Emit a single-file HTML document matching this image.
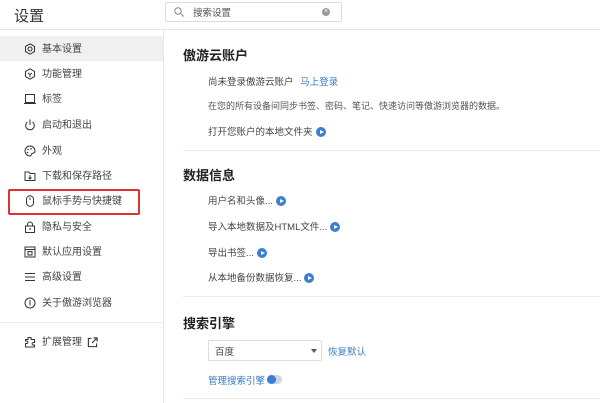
<!DOCTYPE html>
<html><head><meta charset="utf-8"><style>
*{margin:0;padding:0;box-sizing:border-box}
body{width:600px;height:403px;overflow:hidden;background:#fff;font-family:"Liberation Sans","Noto Sans CJK SC",sans-serif;color:#333;position:relative;font-size:10px}
.a{position:absolute;white-space:nowrap}
.hdr{left:0;top:0;width:600px;height:30px;border-bottom:1px solid #e6e6e6}
.side{left:0;top:30px;width:164px;height:373px;border-right:1px solid #e8e8e8}
.it{position:absolute;left:0;width:163px;height:25px;line-height:25px;padding-left:42px;font-size:10px;color:#444;margin-top:1px}
.ic{position:absolute;left:24px;top:6px;width:12px;height:12px}
.h{font-size:13px;font-weight:bold;color:#222}
.t{font-size:9.5px;color:#444}
.sep{height:1px;background:#ececec}
.play{display:inline-block;width:10px;height:10px;border-radius:50%;background:#3b7fd4;vertical-align:middle;margin-left:3px;position:relative}
.play:after{content:"";position:absolute;left:4px;top:2.5px;border-left:4px solid #fff;border-top:2.5px solid transparent;border-bottom:2.5px solid transparent}
</style></head><body>
<div class="a hdr"></div>
<div class="a" style="left:14px;top:5px;font-size:15px;color:#333">设置</div>
<div class="a" style="left:165px;top:2px;width:177px;height:20px;border:1px solid #ddd;border-radius:2px"></div>
<svg class="a" style="left:174px;top:7px" width="10" height="10"><circle cx="4" cy="4" r="3.2" fill="none" stroke="#888" stroke-width="1"/><line x1="6.5" y1="6.5" x2="9.5" y2="9.5" stroke="#888"/></svg>
<div class="a" style="left:193px;top:5px;font-size:9.5px;color:#555">搜索设置</div>
<div class="a" style="left:322px;top:8px;width:8px;height:8px;border-radius:50%;background:#999;color:#fff;font-size:7px;line-height:8px;text-align:center">×</div>
<div class="a side"></div>
<div class="a" style="left:0;top:36px;width:163px;height:25px;background:#f0f0f0"></div>
<div class="it" style="top:36px"><svg class="ic" viewBox="0 0 12 12"><circle cx="6" cy="6" r="2" fill="none" stroke="#333"/><path d="M6 .8L10.5 3.4V8.6L6 11.2 1.5 8.6V3.4Z" fill="none" stroke="#333"/></svg>基本设置</div>
<div class="it" style="top:61px"><svg class="ic" viewBox="0 0 12 12"><path d="M6 .8L10.5 3.4V8.6L6 11.2 1.5 8.6V3.4Z" fill="none" stroke="#333"/><path d="M4 5l2 1.5L8 5M6 6.5V9" fill="none" stroke="#333"/></svg>功能管理</div>
<div class="it" style="top:86px"><svg class="ic" viewBox="0 0 12 12"><rect x="1.5" y="1.5" width="9" height="8" fill="none" stroke="#333"/><line x1="0" y1="10.5" x2="12" y2="10.5" stroke="#333"/></svg>标签</div>
<div class="it" style="top:112px"><svg class="ic" viewBox="0 0 12 12"><path d="M3.5 3A4.3 4.3 0 1 0 8.5 3" fill="none" stroke="#333"/><line x1="6" y1="0.5" x2="6" y2="6" stroke="#333"/></svg>启动和退出</div>
<div class="it" style="top:138px"><svg class="ic" viewBox="0 0 12 12"><path d="M6 1A5 5 0 1 0 6 11C7.5 11 7 9 8 8.5S11 8.5 11 6A5 5 0 0 0 6 1Z" fill="none" stroke="#333"/><circle cx="4" cy="4.5" r=".8" fill="#333"/><circle cx="7" cy="3.8" r=".8" fill="#333"/><circle cx="3.5" cy="7.5" r=".8" fill="#333"/></svg>外观</div>
<div class="it" style="top:163px"><svg class="ic" viewBox="0 0 12 12"><path d="M1 2H5L6 3.5H11V10.5H1Z" fill="none" stroke="#333"/><path d="M6 5V9M4.5 7.5L6 9 7.5 7.5" fill="none" stroke="#333"/></svg>下载和保存路径</div>
<div class="it" style="top:188px"><svg class="ic" viewBox="0 0 12 12"><rect x="2.5" y="0.8" width="7" height="10.4" rx="3.5" fill="none" stroke="#333"/><line x1="6" y1="2.5" x2="6" y2="5" stroke="#333"/></svg>鼠标手势与快捷键</div>
<div class="a" style="left:8px;top:189px;width:132px;height:26px;border:2px solid #d33;border-radius:2px"></div>
<div class="it" style="top:214px"><svg class="ic" viewBox="0 0 12 12"><rect x="1.5" y="5" width="9" height="6.5" fill="none" stroke="#333"/><path d="M3.5 5V3.5A2.5 2.5 0 0 1 8.5 3.5V5" fill="none" stroke="#333"/><circle cx="6" cy="8" r=".9" fill="#333"/></svg>隐私与安全</div>
<div class="it" style="top:239px"><svg class="ic" viewBox="0 0 12 12"><rect x="1" y="1" width="10" height="10" fill="none" stroke="#333"/><line x1="1" y1="3.5" x2="11" y2="3.5" stroke="#333"/><rect x="4" y="5.5" width="4" height="3.5" fill="none" stroke="#333"/></svg>默认应用设置</div>
<div class="it" style="top:264px"><svg class="ic" viewBox="0 0 12 12"><path d="M1 2.5H11M1 6H11M1 9.5H11" stroke="#333"/></svg>高级设置</div>
<div class="it" style="top:290px"><svg class="ic" viewBox="0 0 12 12"><circle cx="6" cy="6" r="5" fill="none" stroke="#333"/><line x1="6" y1="3" x2="6" y2="8.5" stroke="#333"/></svg>关于傲游浏览器</div>
<div class="a sep" style="left:0;top:322px;width:163px"></div>
<div class="it" style="top:329px"><svg class="ic" viewBox="0 0 12 12"><path d="M4 1.5H7V3.5H10.5V6.5H9A1.3 1.3 0 0 0 9 9H10.5V11H1.5V7.5H3A1.3 1.3 0 0 0 3 5H1.5V3.5H4Z" fill="none" stroke="#333"/></svg>扩展管理<svg style="position:absolute;left:87px;top:7px" width="11" height="11" viewBox="0 0 12 12"><path d="M5 1.5H1.5V10.5H10.5V7M7 1H11V5M11 1L5.5 6.5" fill="none" stroke="#333" stroke-width="1.2"/></svg></div>

<div class="a h" style="left:183px;top:45px">傲游云账户</div>
<div class="a t" style="left:208px;top:74px">尚未登录傲游云账户 <span style="color:#3a7cc4;margin-left:4px">马上登录</span></div>
<div class="a t" style="left:208px;top:99px;font-size:9px;color:#555">在您的所有设备间同步书签、密码、笔记、快速访问等傲游浏览器的数据。</div>
<div class="a t" style="left:208px;top:124px">打开您账户的本地文件夹<span class="play"></span></div>
<div class="a sep" style="left:183px;top:150px;width:417px"></div>
<div class="a h" style="left:183px;top:165px">数据信息</div>
<div class="a t" style="left:208px;top:193px">用户名和头像...<span class="play"></span></div>
<div class="a t" style="left:208px;top:219px">导入本地数据及HTML文件...<span class="play"></span></div>
<div class="a t" style="left:208px;top:245px">导出书签...<span class="play"></span></div>
<div class="a t" style="left:208px;top:270px">从本地备份数据恢复...<span class="play"></span></div>
<div class="a sep" style="left:183px;top:296px;width:417px"></div>
<div class="a h" style="left:183px;top:313px">搜索引擎</div>
<div class="a" style="left:208px;top:340px;width:114px;height:21px;border:1px solid #ddd;border-radius:2px"></div>
<div class="a t" style="left:215px;top:344px">百度</div>
<div class="a" style="left:311px;top:349px;border-top:4px solid #555;border-left:3px solid transparent;border-right:3px solid transparent"></div>
<div class="a t" style="left:328px;top:344px;color:#3a7cc4">恢复默认</div>
<div class="a t" style="left:208px;top:373px;color:#3a7cc4">管理搜索引擎</div>
<div class="a" style="left:267px;top:375px;width:15px;height:9px;border-radius:5px;background:#cfd6e0"></div>
<div class="a" style="left:267px;top:375px;width:9px;height:9px;border-radius:50%;background:#3b7fd4"></div>
<div class="a sep" style="left:183px;top:398px;width:417px"></div>
</body></html>
